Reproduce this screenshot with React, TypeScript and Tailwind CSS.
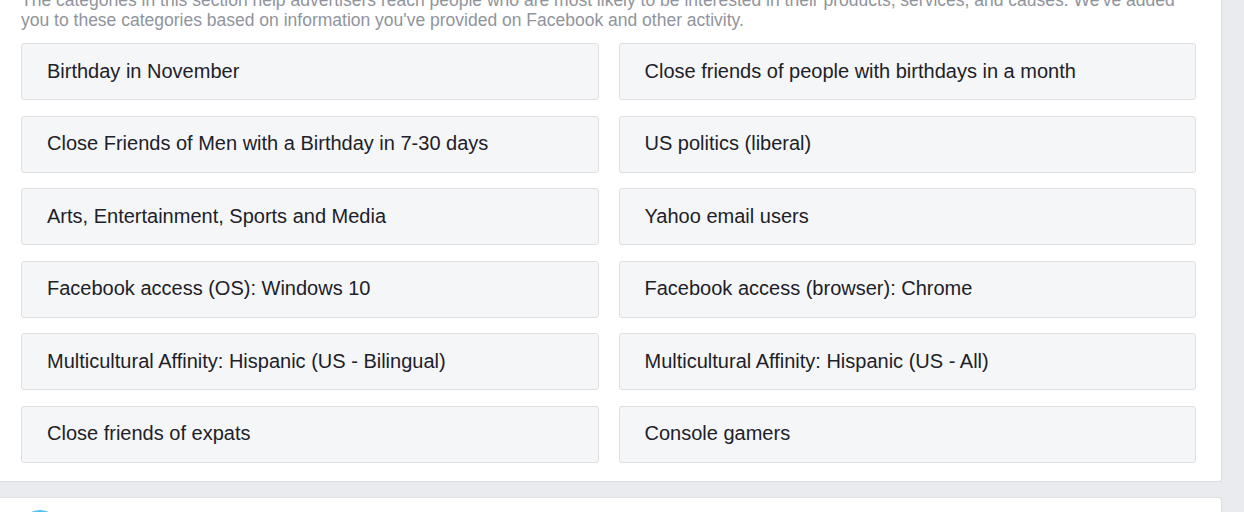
import React from "react";

const categories = [
  "Birthday in November",
  "Close friends of people with birthdays in a month",
  "Close Friends of Men with a Birthday in 7-30 days",
  "US politics (liberal)",
  "Arts, Entertainment, Sports and Media",
  "Yahoo email users",
  "Facebook access (OS): Windows 10",
  "Facebook access (browser): Chrome",
  "Multicultural Affinity: Hispanic (US - Bilingual)",
  "Multicultural Affinity: Hispanic (US - All)",
  "Close friends of expats",
  "Console gamers",
];

export default function App() {
  return (
    <div className="h-[512px] w-[1244px] overflow-hidden bg-[#e9ebee] font-['Liberation_Sans',Arial,sans-serif]">
      {/* Categories panel */}
      <div className="w-[1222px] overflow-hidden rounded-br-[3px] border-r border-b border-[#dddfe2] bg-white pl-[21px] pr-[25px] pb-[18px]">
        <p className="-mt-[10px] text-[17.5px] leading-[20px] text-[#90949c]">
          The categories in this section help advertisers reach people who are most likely to be interested in their products, services, and causes. We've added you to these categories based on information you've provided on Facebook and other activity.
        </p>
        <div className="mt-[13px] grid grid-cols-2 gap-x-[20px] gap-y-[15.5px]">
          {categories.map((c) => (
            <div
              key={c}
              className="flex h-[57px] items-center rounded-[3px] border border-[#dddfe2] bg-[#f5f6f7] pb-[2px] pl-[25px] text-[20px] text-[#1d2129]"
            >
              {c}
            </div>
          ))}
        </div>
      </div>

      {/* Next panel */}
      <div className="mt-[15px] h-[60px] w-[1222px] rounded-tr-[3px] border-t border-r border-[#dddfe2] bg-white pl-[20px] pt-[12px]">
        <div className="h-[40px] w-[40px] rounded-full bg-[#4fc3f0]" />
      </div>
    </div>
  );
}
